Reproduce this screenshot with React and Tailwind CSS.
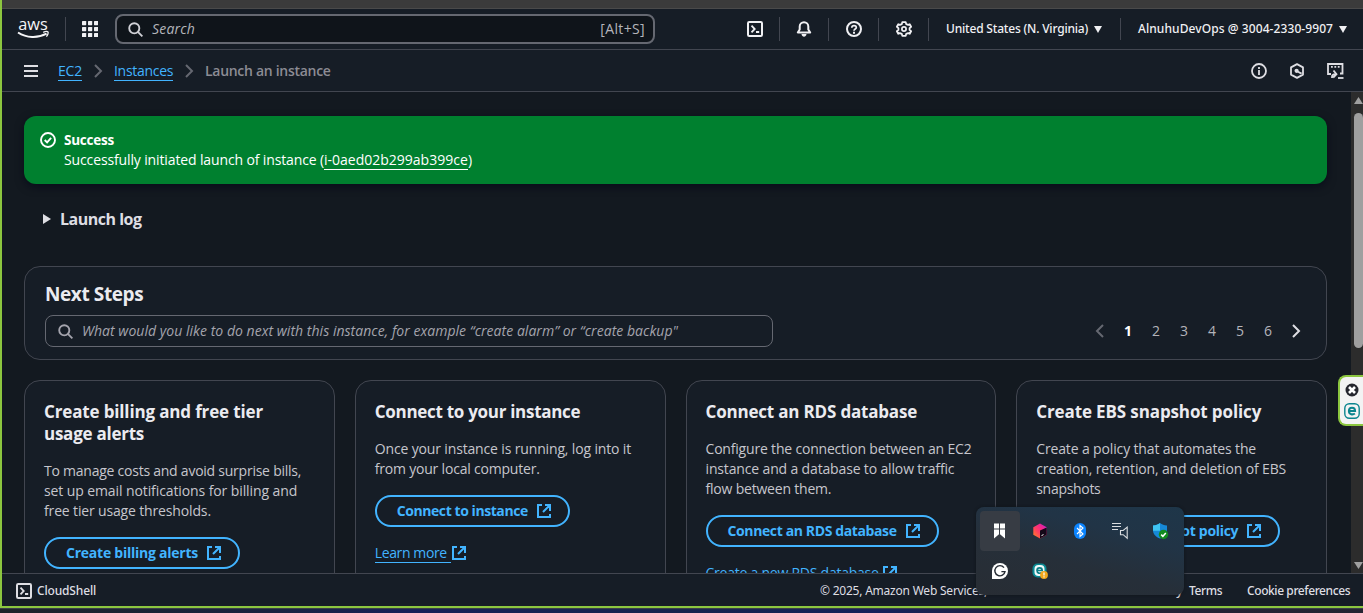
import React from 'react';

function SearchIcon({ className }) {
  return (
    <svg className={className} viewBox="0 0 16 16" fill="none" stroke="currentColor" strokeWidth="2">
      <circle cx="6.7" cy="6.7" r="5.4" />
      <path d="m10.500 10.500 4.800 4.800" />
    </svg>
  );
}

function ExternalIcon() {
  return (
    <svg className="size-4 shrink-0" viewBox="0 0 16 16" fill="none" stroke="currentColor" strokeWidth="2">
      <path d="M6 2H2v12h12v-3M14 8V7" />
      <path d="M9 2h5v5M13.8 2.2 7 9" />
    </svg>
  );
}

function ShellIcon() {
  return (
    <svg className="size-4 shrink-0" viewBox="0 0 16 16" fill="none" stroke="currentColor" strokeWidth="2">
      <rect x="1" y="1" width="14" height="14" rx="1.2" />
      <path d="m4.5 4.7 3.2 3.3-3.2 3.3M9 11h3.2" strokeWidth="1.8" />
    </svg>
  );
}

function Chevron({ className }) {
  return (
    <svg className={className} viewBox="0 0 16 16" fill="none" stroke="currentColor" strokeWidth="2">
      <path d="m5 2 6 6-6 6" />
    </svg>
  );
}

function AwsLogo() {
  return (
    <svg className="h-[22px] w-8 overflow-visible" viewBox="0 0 32 22" fill="none">
      <text x="2.200" y="12" textLength="29.500" lengthAdjust="spacingAndGlyphs" fontFamily="Open Sans, sans-serif" fontSize="17" fontWeight="500" fill="#f5f5f7">aws</text>
      <path d="M2 14.500c8.500 5.500 19.500 6 28.600 1.200" stroke="#f5f5f7" strokeWidth="2" />
      <path d="M27.200 14.300c2-.8 4.300-.8 4.800-.3.500.6-.2 3-1.600 4.600" stroke="#f5f5f7" strokeWidth="1.300" />
    </svg>
  );
}

function HeaderIcon({ children }) {
  return (
    <div className="flex h-full w-[50px] items-center justify-center">
      <svg className="size-4" viewBox="0 0 16 16" fill="none" stroke="currentColor" strokeWidth="2">
        {children}
      </svg>
    </div>
  );
}

function Divider() {
  return <div className="-ml-px h-[23px] w-px shrink-0 bg-[#424650]" />;
}

function TopBar() {
  return (
    <header className="flex h-[41px] shrink-0 items-center border-b border-[#424650] bg-[#161d26] text-[#f0f0f3]">
      <div className="flex w-[63px] items-center pl-[14px]"><AwsLogo /></div>
      <div className="h-6 w-px bg-[#424650]" />
      <svg className="ml-4 size-4" viewBox="0 0 16 16" fill="currentColor">
        {[0, 6, 12].map((y) => [0, 6, 12].map((x) => <rect key={x + '-' + y} x={x} y={y} width="4.2" height="4.2" rx=".6" />))}
      </svg>
      <div className="ml-[17px] flex h-[30px] w-[540px] items-center rounded-lg border-2 border-[#656871] bg-[#0f141a] pr-2 pl-[11px] text-sm text-[#b4b4bb]">
        <SearchIcon className="size-[15px] text-[#d0d0d6]" />
        <span className="ml-[9px] tracking-[0.18px] italic">Search</span>
        <span className="ml-auto tracking-[0.35px]">[Alt+S]</span>
      </div>
      <div className="ml-[75px] flex h-full items-center">
        <HeaderIcon>
          <rect x="1" y="1" width="14" height="14" rx="1.200" />
          <path d="m4.500 4.700 3.200 3.300-3.200 3.300M9 11h3.200" strokeWidth="1.800" />
        </HeaderIcon>
        <div className="-mx-px h-6 w-px shrink-0 bg-[#424650]" />
        <HeaderIcon>
          <path d="M1.800 11.500h12.400L12.300 8.400V5.500C12.300 3 10.400 1.200 8 1.200S3.700 3 3.700 5.500v2.900z" strokeLinejoin="round" />
          <path d="M5.500 13c.4 3.600 4.600 3.600 5 0z" fill="currentColor" stroke="none" />
        </HeaderIcon>
        <Divider />
        <HeaderIcon>
          <circle cx="8" cy="8" r="7" />
          <path d="M5.800 6.800c0-3 4.500-2.900 4.500-.3C10.300 8 8 8 8 9.700" strokeWidth="1.700" />
          <path d="M8 10.800v1.900" />
        </HeaderIcon>
        <Divider />
        <HeaderIcon>
          <path d="M6.300 1.100h3.400l.5 2 2 .8 1.500-.7 1.400 2.600-1.500 1.300v1.800l1.500 1.300-1.400 2.600-1.500-.7-2 .8-.5 2H6.300l-.5-2-2-.8-1.500.7L.9 10.200l1.500-1.300V7.100L.9 5.800l1.400-2.600 1.500.7 2-.8z" strokeLinejoin="round" strokeWidth="1.800" />
          <circle cx="8" cy="8" r="2.100" strokeWidth="1.700" />
        </HeaderIcon>
        <Divider />
      </div>
      <div className="ml-[17px] flex items-center font-['Noto_Sans','Open_Sans',sans-serif] text-xs font-medium">
        <span className="w-[142px] tracking-[-0.19px] whitespace-nowrap">United States (N. Virginia)</span>
        <svg className="ml-1.5 h-[7px] w-2" viewBox="0 0 8 7" fill="currentColor"><path d="M0 0h8L4 7z" /></svg>
      </div>
      <div className="ml-[18px] h-[22px] w-px bg-[#424650]" />
      <div className="ml-[17px] flex items-center font-['Noto_Sans','Open_Sans',sans-serif] text-xs font-medium">
        <span className="w-[195px] tracking-[0.08px] whitespace-nowrap">AlnuhuDevOps @ 3004-2330-9907</span>
        <svg className="ml-1.5 h-[7px] w-2" viewBox="0 0 8 7" fill="currentColor"><path d="M0 0h8L4 7z" /></svg>
      </div>
    </header>
  );
}

function Breadcrumbs() {
  return (
    <nav className="flex h-[42px] shrink-0 items-center border-b border-[#424650] bg-[#161d26] pr-[19px] pl-[22px] text-sm leading-5">
      <svg className="h-3 w-[14px] text-[#dedee3]" viewBox="0 0 14 12" fill="currentColor"><path d="M0 0h14v2H0zM0 5h14v2H0zM0 10h14v2H0z" /></svg>
      <span className="mt-0.5 ml-5 w-6 border-b border-[#42b4ff] leading-[18px] tracking-[-0.2px] text-[#42b4ff]">EC2</span>
      <Chevron className="ml-2 size-4 text-[#656871]" />
      <span className="mt-0.5 ml-2 w-[59px] border-b border-[#42b4ff] leading-[18px] tracking-[-0.3px] text-[#42b4ff]">Instances</span>
      <Chevron className="ml-2 size-4 text-[#656871]" />
      <span className="mt-px ml-2 font-semibold tracking-[-0.29px] text-[#8c8c94]">Launch an instance</span>
      <div className="ml-auto flex gap-[22px] text-[#dedee3]">
        <svg className="size-4" viewBox="0 0 16 16" fill="none" stroke="currentColor" strokeWidth="1.800">
          <circle cx="8" cy="8" r="7" />
          <path d="M8 7v5M8 4v2" />
        </svg>
        <svg className="size-4" viewBox="0 0 16 16" fill="none" stroke="currentColor" strokeWidth="1.800">
          <path d="m8 1.100 6 3.300v7.200l-6 3.300-6-3.300V4.400z" strokeLinejoin="round" />
          <circle cx="7.600" cy="7.800" r="2.100" fill="currentColor" stroke="none" />
          <path d="m8 8.300 4.600 2.300" />
        </svg>
        <svg className="h-4 w-[17px]" viewBox="0 0 17 16" fill="none" stroke="currentColor" strokeWidth="1.800">
          <path d="M4 11H1V1h14.500v9.500H13" />
          <path d="M4 3.900h1.800M7.400 3.900h1.800M10.800 3.900h1.800" />
          <path d="M5 15V14c0-2 1-2.800 3.500-2.800M6.500 7.500l3 3.700-3.300 3.500" />
          <path d="M11 15h5.500" />
        </svg>
      </div>
    </nav>
  );
}

function Flashbar() {
  return (
    <section className="flex h-[68px] shrink-0 rounded-xl bg-[#00802f] px-4 pt-3.5 text-sm leading-5 text-white shadow-[0_3px_8px_rgba(0,7,22,0.6)]">
      <svg className="mt-0.5 size-4" viewBox="0 0 16 16" fill="none" stroke="currentColor" strokeWidth="1.900">
        <circle cx="8" cy="8" r="7" />
        <path d="m4.700 8 2.400 2.400 4-4.600" />
      </svg>
      <div className="ml-2">
        <div className="text-[13.5px] font-bold tracking-[-0.25px]">Success</div>
        <div className="flex">
          <span className="w-[260px] tracking-[-0.13px] whitespace-nowrap">Successfully initiated launch of instance (</span>
          <span className="h-5 w-[144px] border-b border-white leading-5 whitespace-nowrap">i-0aed02b299ab399ce</span>
          <span>)</span>
        </div>
      </div>
    </section>
  );
}

function NextSteps() {
  return (
    <section className="mt-9 flex h-[94px] shrink-0 flex-col rounded-2xl border border-[#424650] bg-[#161d26] px-5 pt-[15px]">
      <h2 className="text-[19px] leading-6 font-bold tracking-[-0.4px] text-[#ebebf0]">Next Steps</h2>
      <div className="mt-[9px] flex items-center">
        <div className="flex h-8 w-[728px] items-center rounded-lg border border-[#656871] pl-3 text-sm text-[#a4a4ad]">
          <SearchIcon className="size-[15px]" />
          <span className="ml-[9px] tracking-[0.035px] whitespace-nowrap italic">What would you like to do next with this instance, for example “create alarm” or “create backup"</span>
        </div>
        <div className="mr-[2px] ml-auto flex items-center text-sm text-[#b4b4bb]">
          <Chevron className="mr-1.5 size-4 rotate-180 text-[#656871]" />
          <span className="w-7 text-center font-bold text-white">1</span>
          {[2, 3, 4, 5, 6].map((n) => <span key={n} className="w-7 text-center">{n}</span>)}
          <Chevron className="ml-1.5 size-4 text-[#dedee3]" />
        </div>
      </div>
    </section>
  );
}

const cards = [
  {
    title: [['Create billing and free tier', 'tracking-[-0.15px]'], ['usage alerts', 'tracking-[-0.25px]']],
    lines: [['To manage costs and avoid surprise bills,', 'tracking-[-0.24px]'], ['set up email notifications for billing and', 'tracking-[-0.1px]'], ['free tier usage thresholds.', 'tracking-[-0.15px]']],
    button: ['Create billing alerts', 'w-[132px] tracking-[-0.24px]'],
  },
  {
    title: [['Connect to your instance', 'tracking-[-0.29px]']],
    lines: [['Once your instance is running, log into it', 'tracking-[-0.15px]'], ['from your local computer.', 'tracking-[-0.2px]']],
    button: ['Connect to instance', 'w-[131px] tracking-[-0.43px]'],
    link: ['Learn more', 'w-[76px] tracking-[-0.38px]'],
  },
  {
    title: [['Connect an RDS database', 'tracking-[-0.19px]']],
    lines: [['Configure the connection between an EC2', 'tracking-[-0.19px]'], ['instance and a database to allow traffic', 'tracking-[-0.15px]'], ['flow between them.', 'tracking-[-0.2px]']],
    button: ['Connect an RDS database', 'w-[169px] tracking-[-0.38px]'],
    link: ['Create a new RDS database', 'w-[176px] tracking-[-0.24px]'],
  },
  {
    title: [['Create EBS snapshot policy', 'tracking-[-0.12px]']],
    lines: [['Create a policy that automates the', 'tracking-[-0.14px]'], ['creation, retention, and deletion of EBS', 'tracking-[-0.14px]'], ['snapshots', 'tracking-[-0.3px]']],
    button: ['Create EBS snapshot policy', 'w-[180px] tracking-[-0.3px]'],
  },
];

function Card({ title, lines, button, link }) {
  return (
    <article className="flex h-[280px] flex-col items-start rounded-2xl border border-[#424650] bg-[#161d26] px-[19px] pt-5">
      <h3 className="text-[17px] leading-[22px] font-bold whitespace-nowrap text-[#ebebf0]">
        {title.map(([t, c]) => <div key={t} className={c}>{t}</div>)}
      </h3>
      <div className="mt-4 text-sm leading-5 whitespace-nowrap text-[#c6c6cd]">
        {lines.map(([t, c]) => <div key={t} className={c}>{t}</div>)}
      </div>
      <div className="mt-4 flex h-8 items-center gap-2 rounded-full border-2 border-[#42b4ff] pr-[16px] pl-5 text-sm font-bold text-[#42b4ff]">
        <span className={'whitespace-nowrap ' + button[1]}>{button[0]}</span>
        <ExternalIcon />
      </div>
      {link && (
        <div className="mt-4 flex items-center text-sm leading-5 text-[#42b4ff]">
          <span className={'h-5 border-b border-[#42b4ff] whitespace-nowrap ' + link[1]}>{link[0]}</span>
          <ExternalIcon />
        </div>
      )}
    </article>
  );
}

function ScrollTrack() {
  return (
    <div className="flex w-3 shrink-0 flex-col items-center bg-[#2c2c2c] pl-[2px]">
      <svg className="mt-[5px] h-[7px] w-[9px]" viewBox="0 0 9 7" fill="#9f9f9f"><path d="M4.500 0 9 7H0z" /></svg>
      <div className="mt-[9px] h-[235px] w-[9px] rounded-full bg-[#9f9f9f]" />
      <svg className="mt-auto mb-1 h-[7px] w-[9px]" viewBox="0 0 9 7" fill="#9f9f9f"><path d="M4.500 7 9 0H0z" /></svg>
    </div>
  );
}

function Footer() {
  return (
    <footer className="flex h-[33px] shrink-0 items-center border-t border-[#424650] bg-[#161d26] pt-0.5 pr-[13px] pl-3.5 font-['Noto_Sans','Open_Sans',sans-serif] text-xs text-[#dedee3]">
      <ShellIcon />
      <span className="ml-[5px] font-medium tracking-[-0.16px]">CloudShell</span>
      <div className="ml-auto flex whitespace-nowrap">
        <span className="w-[324px] tracking-[-0.22px]">© 2025, Amazon Web Services, Inc. or its affiliates.</span>
        <span className="w-[45px] font-medium tracking-[-0.4px]">Privacy</span>
        <span className="w-[58px] font-medium tracking-[-0.4px]">Terms</span>
        <span className="w-[103px] font-medium tracking-[-0.41px]">Cookie preferences</span>
      </div>
    </footer>
  );
}

function TrayItem({ active, children }) {
  return (
    <div className={active ? 'flex size-10 items-center justify-center rounded bg-[#373c44]' : 'flex size-10 items-center justify-center'}>
      <svg className="size-4 overflow-visible" viewBox="0 0 16 16" fill="none">{children}</svg>
    </div>
  );
}

function TrayPopup() {
  return (
    <aside className="absolute top-[507px] left-[976px] grid h-[88px] w-[208px] grid-cols-5 content-start rounded-lg bg-[linear-gradient(195deg,#1e3649_0%,#213446_30%,#262f39_60%,#282d34_100%)] p-1 shadow-[0_0_3px_#10151b]">
      <TrayItem active>
        <path d="M2 .5h5v5H2zM8 .5h5v5H8zM2 6.500h5v4.800L2 15.500zM8 6.500h5v9l-5-4.200z" fill="#fff" />
      </TrayItem>
      <TrayItem>
        <defs>
          <linearGradient id="cube" x1="0" y1="1" x2="1" y2="0"><stop stopColor="#ff8a1e" /><stop offset=".4" stopColor="#ff3f5f" /><stop offset=".7" stopColor="#f02390" /><stop offset="1" stopColor="#a32be0" /></linearGradient>
        </defs>
        <path d="m8 .5 6.700 3.800v7.400L8 15.500l-6.700-3.800V4.300z" fill="url(#cube)" />
        <path d="m8 7.500 6.700-3v7.200L8 15.500z" fill="#140818" />
        <path d="m9.500 12.600 2-1" stroke="#fff" />
      </TrayItem>
      <TrayItem>
        <rect x="2" y="0" width="12" height="16" rx="6" fill="#0a84ff" />
        <path d="m5 5 6 6-3 2.500v-11L11 5l-6 6" stroke="#fff" strokeWidth="1.100" />
      </TrayItem>
      <TrayItem>
        <path d="M0 .5h9M0 3.500h9M0 6.500h6" stroke="#dadde0" strokeWidth="1.100" />
        <path d="M8.500 7.500h2.700l4-3.300v11l-4-3.500H8.500z" stroke="#dadde0" strokeWidth="1.100" />
      </TrayItem>
      <TrayItem>
        <path d="M8 0c2 1.700 4 2.300 7 2.400v5C15 11 12 14 8 15.500 4 14 1 11 1 7.400v-5C4 2.300 6 1.700 8 0z" fill="#1689d8" />
        <path d="M8 0v7.800H1V2.400C4 2.300 6 1.700 8 0z" fill="#3fc4f2" />
        <path d="M8 7.800h7C14.600 11 12 14 8 15.500z" fill="#0c5eaa" />
        <circle cx="11.500" cy="11.500" r="4.700" fill="#128a1f" />
        <path d="m9.200 11.600 1.700 1.700 2.900-3.200" stroke="#fff" strokeWidth="1.500" />
      </TrayItem>
      <TrayItem>
        <path d="M8 0a8 8 0 1 1 0 16H0V8A8 8 0 0 1 8 0z" fill="#fff" />
        <path d="M12 4.600A5.100 5.100 0 1 0 13 8.600H9.400" stroke="#252b33" strokeWidth="1.400" />
      </TrayItem>
      <TrayItem>
        <rect x=".5" y=".5" width="14" height="14" rx="5" fill="#0b8a93" />
        <rect x="2.500" y="2" width="10" height="11" rx="4" fill="#f2fafa" />
        <path d="M5 7.500h5.200C10.200 4 5 4 5 7.500c0 3 3.200 3.300 4.800 2" stroke="#0b7f88" strokeWidth="1.700" />
        <circle cx="12" cy="12" r="3.900" fill="#f2a71b" />
        <path d="M12 9.600v2.800M12 13.200v1.200" stroke="#fff" strokeWidth="1.200" />
      </TrayItem>
    </aside>
  );
}

function SideWidget() {
  return (
    <aside className="absolute top-[375px] right-0 flex h-[51px] w-[25px] flex-col items-center gap-1.5 rounded-l-lg border-2 border-r-0 border-[#8cc63f] bg-[#f3f3f3] pt-1.5">
      <svg className="size-[14px]" viewBox="0 0 14 14" fill="none">
        <circle cx="7" cy="7" r="6.500" fill="#25262e" />
        <path d="m4 4 6 6M10 4l-6 6" stroke="#fff" strokeWidth="2.600" />
      </svg>
      <svg className="size-4" viewBox="0 0 16 16" fill="none" stroke="#0b858e">
        <rect x=".8" y=".8" width="14.400" height="14.400" rx="4.500" strokeWidth="1.400" />
        <path d="M4.800 8h6.300C11.100 3.700 4.900 3.700 4.900 8c0 3.700 4 4 6 2.500" strokeWidth="2" />
      </svg>
    </aside>
  );
}

export default function App() {
  return (
    <div className="relative flex h-[613px] w-[1363px] flex-col overflow-hidden bg-[#3b3b3b] font-['Open_Sans','Noto_Sans',sans-serif]">
      <div className="flex h-[608px] shrink-0 flex-col border-b-2 border-l-2 border-[#8cc63f]">
        <div className="h-[9px] shrink-0 border-b border-[#4a4a4a] bg-[#3b3b3b]" />
        <TopBar />
        <Breadcrumbs />
        <div className="flex min-h-0 flex-1">
          <main className="flex min-w-0 flex-1 flex-col overflow-hidden bg-[#131920] pt-6 pr-6 pl-[22px]">
            <Flashbar />
            <div className="mt-6 flex h-[22px] shrink-0 items-center pl-[19px]">
              <svg className="h-[10px] w-2" viewBox="0 0 8 10" fill="#dedee3"><path d="M0 0v10l8-5z" /></svg>
              <span className="ml-[9px] text-base leading-[22px] font-bold tracking-[-0.5px] text-[#dedee3]">Launch log</span>
            </div>
            <NextSteps />
            <div className="mt-5 grid shrink-0 grid-cols-4 gap-5">
              {cards.map((c) => <Card key={c.button[0]} {...c} />)}
            </div>
          </main>
          <ScrollTrack />
        </div>
        <Footer />
      </div>
      <div className="h-[5px] shrink-0 border-t border-[#3b4048] bg-[linear-gradient(90deg,#1d2328_0%,#18223f_20%,#172058_30%,#17234d_50%,#16205a_65%,#211f38_76%,#252431_100%)]" />
      <TrayPopup />
      <SideWidget />
    </div>
  );
}
